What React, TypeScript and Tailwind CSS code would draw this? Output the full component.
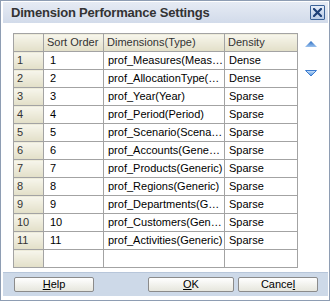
import React from 'react';

const rows: [string, string, string][] = [
  ['1', 'prof_Measures(Measures)', 'Dense'],
  ['2', 'prof_AllocationType(AllocationType)', 'Dense'],
  ['3', 'prof_Year(Year)', 'Sparse'],
  ['4', 'prof_Period(Period)', 'Sparse'],
  ['5', 'prof_Scenario(Scenario)', 'Sparse'],
  ['6', 'prof_Accounts(Generic)', 'Sparse'],
  ['7', 'prof_Products(Generic)', 'Sparse'],
  ['8', 'prof_Regions(Generic)', 'Sparse'],
  ['9', 'prof_Departments(Generic)', 'Sparse'],
  ['10', 'prof_Customers(Generic)', 'Sparse'],
  ['11', 'prof_Activities(Generic)', 'Sparse'],
];

const beige = 'bg-gradient-to-b from-[#f7f6ec] to-[#e2dfc8]';
const btn =
  'h-[15px] border border-[#8b8b8b] rounded-[2px] bg-gradient-to-b from-white to-[#e6e6dd] text-[11px] leading-[11px] text-black flex items-center justify-center';

export default function App() {
  return (
    <div
      className="w-[330px] h-[301px] bg-white border border-[#8e9db3] p-[1px] flex flex-col"
      style={{ fontFamily: '"Liberation Sans", Arial, sans-serif' }}
    >
      {/* title bar */}
      <div className="h-[21px] ml-[1px] flex items-center justify-between bg-gradient-to-b from-[#e6ebf4] to-[#d2dbea] pl-[8px] pr-[3px]">
        <span className="text-[13px] font-bold text-[#333333] tracking-[-0.2px]">Dimension Performance Settings</span>
        <div className="w-[15px] h-[15px] border border-[#3c6398] rounded-[1px] bg-gradient-to-b from-[#e4ecf8] to-[#b9cbe6] flex items-center justify-center">
          <svg width="9" height="9" viewBox="0 0 9 9">
            <path d="M1 1 L8 8 M8 1 L1 8" stroke="#1d3f77" strokeWidth="2.2" strokeLinecap="square" />
          </svg>
        </div>
      </div>

      {/* body */}
      <div className="flex-1 flex pt-[10px] pl-[11px]">
        <table className="border-collapse border border-[#7f7f7f] text-[11px] table-fixed w-[284px] h-fit">
          <colgroup>
            <col className="w-[30px]" />
            <col className="w-[60px]" />
            <col className="w-[121px]" />
            <col className="w-[73px]" />
          </colgroup>
          <thead>
            <tr className="h-[18px]">
              <th className={`${beige} border border-[#a3a3a3]`}></th>
              <th className={`${beige} border border-[#a3a3a3] font-normal text-[#333333] text-left pl-[3px]`}>Sort Order</th>
              <th className={`${beige} border border-[#a3a3a3] font-normal text-[#333333] text-left pl-[3px] whitespace-nowrap overflow-hidden`}>Dimensions(Type)</th>
              <th className={`${beige} border border-[#a3a3a3] font-normal text-[#333333] text-left pl-[3px]`}>Density</th>
            </tr>
          </thead>
          <tbody>
            {rows.map(([n, dim, den]) => (
              <tr key={n} className="h-[18px]">
                <td className={`${beige} border border-[#a3a3a3] text-[#333333] pl-[3px] py-0`}>{n}</td>
                <td className="border border-[#a3a3a3] pl-[6px] py-0">{n}</td>
                <td className="border border-[#a3a3a3] pl-[4px] pr-[1px] py-0 whitespace-nowrap overflow-hidden text-ellipsis">{dim}</td>
                <td className="border border-[#a3a3a3] pl-[4px] py-0">{den}</td>
              </tr>
            ))}
            <tr className="h-[18px]">
              <td className={`${beige} border border-[#a3a3a3]`}></td>
              <td className="border border-[#a3a3a3]"></td>
              <td className="border border-[#a3a3a3]"></td>
              <td className="border border-[#a3a3a3]"></td>
            </tr>
          </tbody>
        </table>
        <div className="flex flex-col pl-[7px] pt-[8px] gap-[23px]">
          <svg width="12" height="6" viewBox="0 0 12 6">
            <defs>
              <linearGradient id="up" x1="0" y1="0" x2="0" y2="1">
                <stop offset="0" stopColor="#2b6cc0" />
                <stop offset="1" stopColor="#9cc3ef" />
              </linearGradient>
            </defs>
            <polygon points="6,0 12,6 0,6" fill="url(#up)" />
          </svg>
          <svg width="12" height="6" viewBox="0 0 12 6">
            <defs>
              <linearGradient id="dn" x1="0" y1="0" x2="0" y2="1">
                <stop offset="0" stopColor="#cfe4fa" />
                <stop offset="1" stopColor="#4c8fdc" />
              </linearGradient>
            </defs>
            <polygon points="0.5,0.5 11.5,0.5 6,6" fill="url(#dn)" stroke="#3b7bd0" strokeWidth="1" />
          </svg>
        </div>
      </div>

      {/* button bar */}
      <div className="h-[24px] ml-[1px] mb-[3px] bg-[#cdd9e8] border-t border-[#b7c6da] flex items-center justify-between pl-[11px] pr-[10px]">
        <button className={`${btn} w-[80px]`}>
          <span><u>H</u>elp</span>
        </button>
        <div className="flex gap-[4px]">
          <button className={`${btn} w-[86px]`}>
            <span><u>O</u>K</span>
          </button>
          <button className={`${btn} w-[80px]`}>
            <span>Cance<u>l</u></span>
          </button>
        </div>
      </div>
    </div>
  );
}
